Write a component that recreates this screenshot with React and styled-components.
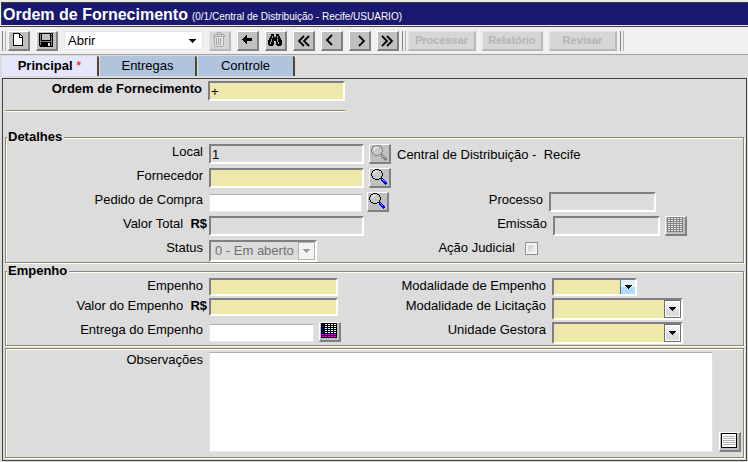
import React from "react";
import styled, { createGlobalStyle, css } from "styled-components";

const khaki = "#eee8aa";
const face = "#dcdcdc";

const GlobalStyle = createGlobalStyle`
  *, *::before, *::after { box-sizing: border-box; }
  html { background: #f0f0f0; }
  body { margin: 0; font: 13px/16px "Liberation Sans", Arial, sans-serif; color: #000; }
  button, input, select, textarea { font: inherit; color: inherit; margin: 0; border-radius: 0; }
`;

const Page = styled.div`
  display: flex;
  flex-direction: column;
  min-height: 100vh;
  padding-top: 2px;
  background: #ececec;
`;

const TitleBar = styled.header`
  display: flex;
  align-items: baseline;
  gap: 4px;
  height: 23px;
  padding-left: 1px;
  margin-left: 1px;
  border-top: 1px solid #404040;
  border-left: 1px solid #404040;
  background: #191970;
  color: #fff;
  white-space: nowrap;
`;

const Title = styled.h1`
  margin: 0;
  font-size: 16px;
  line-height: 24px;
`;

const Context = styled.span`
  font-size: 10px;
`;

const Toolbar = styled.div`
  display: flex;
  align-items: center;
  gap: 3px;
  height: 29px;
  margin-top: 1px;
  padding: 0 2px;
  border-top: 1px solid #404040;
  border-bottom: 1px solid #a0a0a0;
  background: #f0f0f0;
`;

const Cluster = styled.div`
  display: flex;
  align-items: center;
  gap: 6px;
`;

const Grip = styled.span`
  width: 4px;
  height: 20px;
  margin-right: -1px;
  border: solid;
  border-color: #808080 #b0b0b0 #808080 #808080;
  border-width: 0 1px;
`;

const ToolButton = styled.button`
  display: grid;
  place-items: center;
  flex: none;
  width: 22px;
  height: 20px;
  padding: 0 1px 1px 0;
  border: solid;
  border-width: 1px 2px 2px 1px;
  border-color: #fff #808080 #808080 #fff;
  background: #c0c0c0;

  ${(p) =>
    p.$flat &&
    css`
      background: #d6d6d4;
      border-color: #e4e4e4 #b8b8b8 #b8b8b8 #e4e4e4;
    `}
`;

const TextButton = styled.button`
  height: 20px;
  width: ${(p) => p.$w}px;
  padding: 0;
  border: solid;
  border-width: 1px 2px 2px 1px;
  border-color: #e4e4e4 #b8b8b8 #b8b8b8 #e4e4e4;
  background: #d6d6d4;
  color: #b4b4b4;
  font-size: 11px;
  font-weight: bold;
`;

const Body = styled.main`
  display: flex;
  flex-direction: column;
  flex: 1;
  padding: 1px 1px 1px 2px;
  background: ${face};
`;

const Tabs = styled.nav`
  display: flex;
  gap: 1px;
  height: 22px;
  padding-bottom: 2px;
`;

const Tab = styled.button`
  width: 97px;
  padding: 0;
  border: 0;
  border-right: 2px solid #4d4930;
  border-top-right-radius: 2px;
  background: ${(p) => (p.$active ? "#e6e6fa" : "#b0c4de")};
  font-weight: ${(p) => (p.$active ? "bold" : "normal")};
`;

const Star = styled.span`
  color: #f00;
  font-weight: normal;
`;

const Frame = styled.form`
  display: flex;
  flex-direction: column;
  flex: 1;
  padding: 2px 1px 1px 2px;
  border: 1px solid #404040;
`;

const HeaderBlock = styled.div`
  width: 340px;
  padding-bottom: 7px;
  border-bottom: 1px solid #8c8870;
  box-shadow: 0 1px #fffff0;
  margin-bottom: 19px;
`;

const Group = styled.fieldset`
  min-width: 0;
  margin: 0 1px 1px 0;
  padding: 0 0 0 1px;
  border: 1px solid #8c8870;
  box-shadow: inset 1px 1px #fffff0, 1px 1px #fffff0;
`;

const Legend = styled.legend`
  padding: 0 2px 0 1px;
  background: ${face};
  font-weight: bold;
  line-height: 14px;
`;

const Rows = styled.div`
  display: flex;
  flex-direction: column;
  gap: ${(p) => p.$gap || 0}px;
`;

const Row = styled.div`
  display: flex;
  align-items: flex-start;
  height: ${(p) => p.$h || 22}px;
`;

const Half = styled.div`
  display: flex;
  align-items: flex-start;
  flex: none;
  width: 390px;
`;

const Label = styled.label`
  flex: none;
  width: ${(p) => p.$w || 202}px;
  padding-right: ${(p) => (p.$tight ? 2 : 6)}px;
  text-align: right;
  white-space: pre;
  font-weight: ${(p) => (p.$bold ? "bold" : "normal")};
`;

const Control = styled.div`
  display: flex;
  align-items: center;
  gap: 5px;
  height: 20px;
`;

const Box = styled.input`
  width: ${(p) => p.$w}px;
  height: ${(p) => p.$h || 20}px;
  padding: 1px 1px 0;
  outline: 0;
  border: 2px solid;
  border-color: #808080 #fff #fff #808080;
  background: ${(p) => (p.$fill ? khaki : face)};

  ${(p) =>
    p.$white &&
    css`
      align-self: flex-end;
      height: 18px;
      border: 1px solid;
      border-color: #abadb3 #e2e3ea #e3e9ef #e2e3ea;
      border-radius: 1px;
      background: #fff;
    `}
`;

const Drop = styled.span`
  position: relative;
  display: block;
  flex: none;
  width: ${(p) => p.$w}px;
  height: ${(p) => p.$h || 22}px;
`;

const Select = styled.select`
  appearance: none;
  display: block;
  width: 100%;
  height: 100%;
  padding: 0 4px;
  outline: 0;
  opacity: 1;
  border: 2px solid;
  border-color: #808080 #fff #fff #808080;
  background: ${khaki};

  ${(p) =>
    p.$plain &&
    css`
      border: 1px solid #e3e3e3;
      padding: 0 3px;
      background: #fff;
    `}
  ${(p) =>
    p.disabled &&
    css`
      background: ${face};
      color: #707070;
    `}
`;

const variants = {
  classic: css`
    border: 1px solid #707070;
    background: linear-gradient(#f2f2f2 50%, #dcdcdc 50%);
    box-shadow: inset 0 0 0 1px #fcfcfc;
  `,
  hot: css`
    border-left: 1px solid #3c7fb1;
    background: linear-gradient(#e4f4fc 50%, #b0dcf4 50%);
  `,
  off: css`
    border: 1px solid #adb2b5;
    background: #f4f4f4;
    color: #9a9a9a;
  `,
  plain: css``,
};

const DropArrow = styled.span`
  position: absolute;
  inset: 2px 2px 2px auto;
  width: ${(p) => (p.$kind === "hot" ? 15 : 17)}px;
  display: grid;
  place-items: center;
  pointer-events: none;
  ${(p) => variants[p.$kind]}
`;

const Note = styled.span`
  padding: 2px 0 0 1px;
  white-space: pre;
`;

const Check = styled.input`
  appearance: none;
  width: 13px;
  height: 13px;
  margin: 2px 0 0 4px;
  border: 1px solid #8e8f8f;
  background: linear-gradient(135deg, #c8ccd2, #f6f6f6);
  box-shadow: inset 0 0 0 2px #f4f4f4;
`;

const NotesGroup = styled(Group)`
  display: flex;
  flex: 1;
  margin-top: 1px;
  padding-top: 1px;
`;

const NotesRow = styled.div`
  display: flex;
  gap: 6px;
  flex: 1;
  padding: 2px 2px 3px 0;
`;

const Notes = styled.textarea`
  flex: 1;
  min-width: 0;
  min-height: 100px;
  margin-left: -6px;
  border: 1px solid;
  border-color: #abadb3 #e2e3ea #e3e9ef #e2e3ea;
  outline: 0;
  resize: none;
  background: #fff;
`;

const NotesButton = styled(ToolButton)`
  align-self: flex-end;
`;

const Svg = ({ w = 16, h = 16, children }) => (
  <svg width={w} height={h} viewBox={`0 0 ${w} ${h}`} shapeRendering="crispEdges" aria-hidden="true">
    {children}
  </svg>
);

const Triangle = () => (
  <Svg w={7} h={4}>
    <path d="M0 0h7v1H0zM1 1h5v1H1zM2 2h3v1H2zM3 3h1v1H3z" fill="currentColor" />
  </Svg>
);

const PageIcon = () => (
  <Svg>
    <path d="M3 2h7l3 3v9H3z" fill="#fff" />
    <path d="M3 1h7v1H3zM3 2h1v12H3zM3 13h10v1H3zM12 5h1v9h-1zM9 2h1v4h-1zM9 5h4v1H9zM10 2h1v1h-1zM11 3h1v1h-1zM12 4h1v1h-1z" />
  </Svg>
);

const SaveIcon = () => (
  <Svg>
    <path d="M1 1h14v14H2l-1-1z" />
    <path d="M4 2h8v6H4z" fill="#c0c0c0" />
    <path d="M2 2h1v11H2zM13 4h1v10h-1zM3 9h10v1H3z" fill="#808080" />
    <path d="M13 2h1v1h-1zM10 11h2v3h-2z" fill="#d8d8d8" />
  </Svg>
);

const TrashIcon = () => (
  <Svg>
    <path d="M4 5h9v10H4z" fill="#e4e4e4" />
    <path
      d="M6 0h4v1H6zM5 1h1v1H5zM10 1h1v1h-1zM3 2h10v1H3zM2 3h1v1H2zM13 3h1v1h-1zM2 4h12v1H2zM3 5h1v9H3zM12 5h1v9h-1zM4 14h8v1H4zM5 6h1v7H5zM7 6h1v7H7zM9 6h1v7H9z"
      fill="#a6a6a6"
    />
  </Svg>
);

const BackIcon = () => (
  <Svg>
    <path d="M3 7h1v1H3zM4 6h1v3H4zM5 5h1v5H5zM6 4h1v7H6zM7 3h1v9H7zM7 6h6v3H7z" />
  </Svg>
);

const FindIcon = () => (
  <Svg>
    <path d="M4 2h3v2H4zM9 2h3v2H9zM3 4h4v2H3zM9 4h4v2H9zM2 6h5v2H2zM9 6h5v2H9zM7 5h2v4H7zM1 8h6v5H1zM9 8h6v5H9zM2 13h4v1H2zM10 13h4v1h-4z" />
    <path d="M5 4h1v2H5zM10 4h1v2h-1zM4 7h1v3H4zM10 7h1v3h-1zM3 10h1v2H3zM11 10h1v2h-1z" fill="#a8a8a8" />
  </Svg>
);

const Chevron = ({ d }) => (
  <svg width="16" height="16" viewBox="0 0 16 16" aria-hidden="true">
    <path d={d} fill="none" stroke="#000" strokeWidth="1.8" />
  </svg>
);

const LensIcon = ({ off }) => (
  <Svg>
    <path d="M4 1h4l3 3v4l-3 2H4L1 8V4z" fill="#c8c8c8" />
    <path
      d="M4 0h4v1H4zM2 1h2v1H2zM8 1h2v1H8zM1 2h1v2H1zM10 2h1v2h-1zM0 4h1v3H0zM11 4h1v3h-1zM1 7h1v2H1zM10 7h1v2h-1zM2 9h2v1H2zM8 9h2v1H8zM4 10h4v1H4z"
      fill={off ? "#808080" : "#000"}
    />
    <path d="M3 3h1v2H3zM4 2h2v1H4z" fill="#fff" />
    <path d="M10 9h2v1h1v1h1v1h1v1h1v2h-1v1h-1v-1h-1v-1h-1v-1h-1v-1h-1z" fill={off ? "#808080" : "#0000ee"} />
    <path d="M11 10h1v1h-1zM12 11h1v1h-1zM13 12h1v1h-1z" fill={off ? "#c8c8c8" : "#9090f0"} />
  </Svg>
);

const CalendarIcon = ({ off }) => (
  <Svg>
    <path d="M0 0h16v15H0z" fill={off ? "#808080" : "#000"} />
    {[1, 3, 5, 7, 9, 11, 13].map((y) =>
      [1, 4, 7, 10, 13].map((x) => (
        <rect
          key={`${x}-${y}`}
          x={x}
          y={y}
          width="2"
          height="1"
          fill={off ? "#eee" : y > 10 ? "#ff00ff" : x === 1 ? "#000080" : "#fff"}
        />
      ))
    )}
  </Svg>
);

const LinesIcon = () => (
  <Svg>
    <path d="M0 0h16v15H0z" />
    <path d="M1 1h14v13H1z" fill="#fff" />
    <path d="M2 3h12v1H2zM2 5h12v1H2zM2 7h12v1H2zM2 9h12v1H2zM2 11h12v1H2z" fill="#b0b0b0" />
  </Svg>
);

const Dropdown = ({ id, label, w, h, kind = "classic", plain, disabled, value = "" }) => (
  <Drop $w={w} $h={h}>
    <Select id={id} aria-label={label} $plain={plain} disabled={disabled}>
      <option>{value}</option>
    </Select>
    <DropArrow $kind={kind}>
      <Triangle />
    </DropArrow>
  </Drop>
);

const Lookup = ({ label, off }) => (
  <ToolButton type="button" aria-label={label} disabled={off}>
    <LensIcon off={off} />
  </ToolButton>
);

export default function App() {
  return (
    <Page>
      <GlobalStyle />
      <TitleBar>
        <Title>Ordem de Fornecimento</Title>
        <Context>(0/1/Central de Distribuição - Recife/USUARIO)</Context>
      </TitleBar>

      <Toolbar role="toolbar">
        <Grip />
        <Cluster>
          <ToolButton aria-label="Novo"><PageIcon /></ToolButton>
          <ToolButton aria-label="Salvar"><SaveIcon /></ToolButton>
          <Dropdown label="Ação" w={139} h={19} kind="plain" plain value="Abrir" />
          <ToolButton aria-label="Excluir" $flat disabled><TrashIcon /></ToolButton>
          <ToolButton aria-label="Voltar"><BackIcon /></ToolButton>
          <ToolButton aria-label="Localizar"><FindIcon /></ToolButton>
          <ToolButton aria-label="Primeiro"><Chevron d="M9 4L4 9l5 5M14 4L9 9l5 5" /></ToolButton>
          <ToolButton aria-label="Anterior"><Chevron d="M9 3L4 8l5 5" /></ToolButton>
          <ToolButton aria-label="Próximo"><Chevron d="M8 4l5 5-5 5" /></ToolButton>
          <ToolButton aria-label="Último"><Chevron d="M3 4l5 5-5 5M8 4l5 5-5 5" /></ToolButton>
        </Cluster>
        <Grip />
        <Cluster>
          <TextButton $w={68} disabled>Processar</TextButton>
          <TextButton $w={61} disabled>Relatório</TextButton>
          <TextButton $w={68} disabled>Revisar</TextButton>
        </Cluster>
        <Grip />
      </Toolbar>

      <Body>
        <Tabs>
          <Tab $active>Principal <Star>*</Star></Tab>
          <Tab>Entregas</Tab>
          <Tab>Controle</Tab>
        </Tabs>

        <Frame>
          <HeaderBlock>
            <Row>
              <Label htmlFor="ordem" $bold $w={203}>Ordem de Fornecimento</Label>
              <Box id="ordem" $w={137} $fill defaultValue="+" />
            </Row>
          </HeaderBlock>

          <Group>
            <Legend>Detalhes</Legend>
            <Rows $gap={2}>
              <Row>
                <Label htmlFor="local">Local</Label>
                <Control>
                  <Box id="local" $w={155} readOnly defaultValue="1" />
                  <Lookup label="Buscar local" off />
                  <Note>Central de Distribuição -  Recife</Note>
                </Control>
              </Row>
              <Row>
                <Label htmlFor="fornecedor">Fornecedor</Label>
                <Control>
                  <Box id="fornecedor" $w={155} $fill />
                  <Lookup label="Buscar fornecedor" />
                </Control>
              </Row>
              <Row>
                <Half>
                  <Label htmlFor="pedido">Pedido de Compra</Label>
                  <Control>
                    <Box id="pedido" $w={153} $white />
                    <Lookup label="Buscar pedido" />
                  </Control>
                </Half>
                <Label htmlFor="processo" $w={152}>Processo</Label>
                <Box id="processo" $w={107} readOnly />
              </Row>
              <Row>
                <Half>
                  <Label htmlFor="total" $tight>Valor Total  <b>R$</b></Label>
                  <Box id="total" $w={155} readOnly />
                </Half>
                <Label htmlFor="emissao" $w={156}>Emissão</Label>
                <Control>
                  <Box id="emissao" $w={107} readOnly />
                  <ToolButton type="button" aria-label="Calendário de emissão" disabled>
                    <CalendarIcon off />
                  </ToolButton>
                </Control>
              </Row>
              <Row>
                <Half>
                  <Label htmlFor="status">Status</Label>
                  <Dropdown id="status" w={108} kind="off" disabled value="0 - Em aberto" />
                </Half>
                <Label htmlFor="judicial" $w={124}>Ação Judicial</Label>
                <Check id="judicial" type="checkbox" />
              </Row>
            </Rows>
          </Group>

          <Group>
            <Legend>Empenho</Legend>
            <Rows>
              <Row $h={20}>
                <Half>
                  <Label htmlFor="empenho">Empenho</Label>
                  <Box id="empenho" $w={129} $h={18} $fill />
                </Half>
                <Label htmlFor="modemp" $w={155}>Modalidade de Empenho</Label>
                <Dropdown id="modemp" w={85} h={18} kind="hot" />
              </Row>
              <Row $h={24}>
                <Half>
                  <Label htmlFor="valoremp" $tight>Valor do Empenho  <b>R$</b></Label>
                  <Box id="valoremp" $w={129} $h={18} $fill />
                </Half>
                <Label htmlFor="modlic" $w={155}>Modalidade de Licitação</Label>
                <Dropdown id="modlic" w={131} />
              </Row>
              <Row $h={23}>
                <Half>
                  <Label htmlFor="entrega">Entrega do Empenho</Label>
                  <Control>
                    <Box id="entrega" $w={105} $white />
                    <ToolButton type="button" aria-label="Calendário de entrega">
                      <CalendarIcon />
                    </ToolButton>
                  </Control>
                </Half>
                <Label htmlFor="unidade" $w={155}>Unidade Gestora</Label>
                <Dropdown id="unidade" w={131} />
              </Row>
            </Rows>
          </Group>

          <NotesGroup>
            <NotesRow>
              <Label htmlFor="obs">Observações</Label>
              <Notes id="obs" />
              <NotesButton type="button" aria-label="Abrir editor">
                <LinesIcon />
              </NotesButton>
            </NotesRow>
          </NotesGroup>
        </Frame>
      </Body>
    </Page>
  );
}
